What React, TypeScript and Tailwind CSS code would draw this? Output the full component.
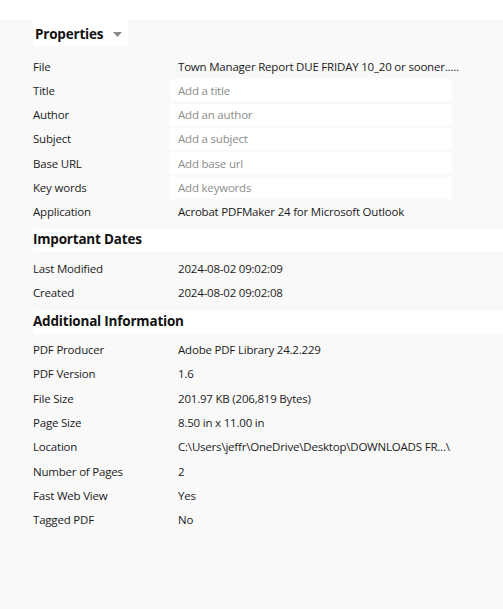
import React from "react";

type Row = { label: string; value?: string; placeholder?: string };

const props: Row[] = [
  { label: "File", value: "Town Manager Report DUE FRIDAY 10_20 or sooner....." },
  { label: "Title", placeholder: "Add a title" },
  { label: "Author", placeholder: "Add an author" },
  { label: "Subject", placeholder: "Add a subject" },
  { label: "Base URL", placeholder: "Add base url" },
  { label: "Key words", placeholder: "Add keywords" },
  { label: "Application", value: "Acrobat PDFMaker 24 for Microsoft Outlook" },
];

const dates: Row[] = [
  { label: "Last Modified", value: "2024-08-02 09:02:09" },
  { label: "Created", value: "2024-08-02 09:02:08" },
];

const info: Row[] = [
  { label: "PDF Producer", value: "Adobe PDF Library 24.2.229" },
  { label: "PDF Version", value: "1.6" },
  { label: "File Size", value: "201.97 KB (206,819 Bytes)" },
  { label: "Page Size", value: "8.50 in x 11.00 in" },
  { label: "Location", value: "C:\\Users\\jeffr\\OneDrive\\Desktop\\DOWNLOADS FR...\\" },
  { label: "Number of Pages", value: "2" },
  { label: "Fast Web View", value: "Yes" },
  { label: "Tagged PDF", value: "No" },
];

function PropRow({ r }: { r: Row }) {
  return (
    <div className="flex h-[24.3px] items-center">
      <div className="w-[137px] shrink-0 text-[#1b1b1b]">{r.label}</div>
      {r.placeholder ? (
        <div className="flex h-[22px] w-[282px] items-center bg-white pl-[8px] text-[#8c8c8c]">
          {r.placeholder}
        </div>
      ) : (
        <div className="whitespace-nowrap pl-[8px] text-[#1b1b1b]">{r.value}</div>
      )}
    </div>
  );
}

function SectionHeader({ title }: { title: string }) {
  return (
    <div className="flex h-[23px] items-center bg-white pb-[3px] text-[13.5px] font-bold tracking-[-0.2px] text-[#111]">
      {title}
    </div>
  );
}

export default function App() {
  return (
    <div
      className="h-[609px] w-[503px] overflow-hidden bg-white text-[11.5px] tracking-[-0.2px]"
      style={{ fontFamily: '"Open Sans", "Noto Sans", sans-serif' }}
    >
      <div className="h-[20px] bg-white" />
      <div className="h-[589px] bg-[#f9f9f9] pl-[33px]">
        <div className="flex h-[26px] w-[95px] items-center gap-[10px] bg-white pl-[2px]">
          <span className="pt-[2px] text-[13.5px] font-bold tracking-[-0.2px] text-[#111]">Properties</span>
          <svg width="9" height="5" viewBox="0 0 9 5" className="mt-[2px]">
            <path d="M0 0 H9 L4.5 5 Z" fill="#8a8a8a" />
          </svg>
        </div>
        <div className="mt-[8px]">
          {props.map((r) => (
            <PropRow key={r.label} r={r} />
          ))}
        </div>
        <div className="mt-[5px]">
          <SectionHeader title="Important Dates" />
        </div>
        <div className="mt-[4px]">
          {dates.map((r) => (
            <PropRow key={r.label} r={r} />
          ))}
        </div>
        <div className="mt-[6px]">
          <SectionHeader title="Additional Information" />
        </div>
        <div className="mt-[4px]">
          {info.map((r) => (
            <PropRow key={r.label} r={r} />
          ))}
        </div>
      </div>
    </div>
  );
}
